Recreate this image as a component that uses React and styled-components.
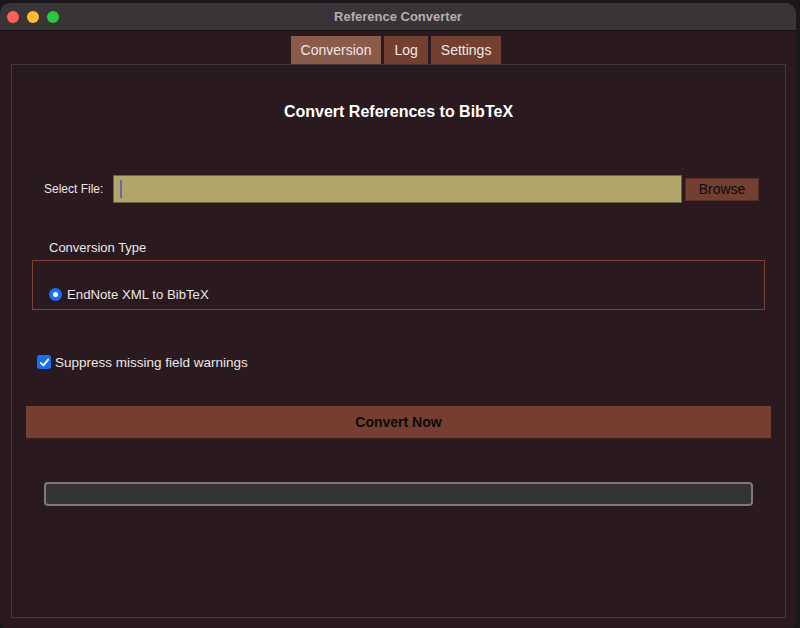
import React from 'react';
import styled, { createGlobalStyle } from 'styled-components';

const GlobalStyle = createGlobalStyle`
  html, body {
    margin: 0;
    padding: 0;
    background: #1b181d;
    font-family: "Liberation Sans", Arial, sans-serif;
  }
`;

const Desktop = styled.div`
  width: 800px;
  height: 628px;
  padding-top: 3px;
  box-sizing: border-box;
  overflow: hidden;
`;

const Window = styled.div`
  width: 796px;
  height: 627px;
  display: flex;
  flex-direction: column;
  border-radius: 10px;
  overflow: hidden;
  background: #2a1a1f;
`;

const TitleBar = styled.div`
  height: 27px;
  flex-shrink: 0;
  display: flex;
  align-items: center;
  position: relative;
  background: #393536;
  border-bottom: 1px solid #151113;
`;

const Lights = styled.div`
  display: flex;
  gap: 8px;
  padding-left: 7px;
`;

const Light = styled.span`
  width: 12px;
  height: 12px;
  border-radius: 50%;
  background: ${p => p.color};
`;

const WindowTitle = styled.div`
  position: absolute;
  left: 0;
  right: 0;
  text-align: center;
  font-size: 13px;
  font-weight: bold;
  color: #b3aeaf;
  pointer-events: none;
`;

const Body = styled.div`
  flex: 1;
  display: flex;
  flex-direction: column;
  padding: 5px 10px 12px 11px;
`;

const Tabs = styled.div`
  display: flex;
  justify-content: center;
  gap: 3px;
  padding-right: 5px;
`;

const Tab = styled.div`
  height: 28px;
  padding: 0 10px;
  display: flex;
  align-items: center;
  font-size: 14px;
  color: #efe7e5;
  background: ${p => (p.active ? '#8a5a4a' : '#723f30')};
`;

const Panel = styled.div`
  flex: 1;
  display: flex;
  flex-direction: column;
  border: 1px solid #403a3c;
  padding-top: 37px;
`;

const Heading = styled.h1`
  margin: 0;
  text-align: center;
  font-size: 16px;
  line-height: 20px;
  font-weight: bold;
  color: #ffffff;
`;

const FileRow = styled.div`
  display: flex;
  align-items: center;
  margin-top: 53px;
  padding: 0 26px 0 32px;
`;

const Label = styled.span`
  font-size: 12px;
  color: #ece6e6;
  margin-right: 10px;
`;

const FileInput = styled.div`
  flex: 1;
  height: 28px;
  box-sizing: border-box;
  display: flex;
  align-items: center;
  padding-left: 6px;
  background: #b1a569;
  border: 1px solid #6e6340;
`;

const Caret = styled.span`
  width: 2px;
  height: 18px;
  background: #5b6cbf;
`;

const BrowseButton = styled.button`
  margin-left: 3px;
  width: 74px;
  height: 23px;
  padding: 0;
  font-family: inherit;
  font-size: 14px;
  color: #0c0a0a;
  background: #733f30;
  border: 1px solid #5c2f23;
`;

const GroupTitle = styled.div`
  margin: 37px 0 0 37px;
  font-size: 13px;
  line-height: 16px;
  color: #ece6e6;
`;

const GroupBox = styled.div`
  margin: 4px 20px 0 20px;
  height: 50px;
  box-sizing: border-box;
  border: 1px solid #7a4232;
  padding: 25px 0 0 16px;
`;

const OptionRow = styled.label`
  display: flex;
  align-items: center;
  gap: 5px;
  height: 16px;
  font-size: 13.2px;
  color: #ece6e6;
`;

const Radio = styled.span`
  width: 13px;
  height: 13px;
  border-radius: 50%;
  background: #1a6ff0;
  display: flex;
  align-items: center;
  justify-content: center;
  &::after {
    content: '';
    width: 5px;
    height: 5px;
    border-radius: 50%;
    background: #ffffff;
  }
`;

const CheckRow = styled(OptionRow)`
  margin: 44px 0 0 25px;
  gap: 4px;
  font-size: 13.5px;
`;

const Checkbox = styled.span`
  width: 14px;
  height: 14px;
  border-radius: 3px;
  background: #1a6ff0;
  display: flex;
  align-items: center;
  justify-content: center;
`;

const ConvertButton = styled.button`
  margin: 36px 14px 0 14px;
  height: 33px;
  padding: 0;
  border: none;
  border-bottom: 1px solid #3a1f1a;
  background: #743f31;
  font-family: inherit;
  font-size: 14px;
  font-weight: bold;
  color: #0c0a0a;
`;

const Progress = styled.div`
  margin: 43px 32px 0 32px;
  height: 24px;
  box-sizing: border-box;
  border: 2px solid #7c7a7b;
  border-radius: 4px;
  background: #343434;
`;

const App = () => (
  <>
    <GlobalStyle />
    <Desktop>
      <Window>
        <TitleBar>
          <Lights>
            <Light color="#fe5f57" />
            <Light color="#febc2e" />
            <Light color="#28c840" />
          </Lights>
          <WindowTitle>Reference Converter</WindowTitle>
        </TitleBar>
        <Body>
          <Tabs>
            <Tab active>Conversion</Tab>
            <Tab>Log</Tab>
            <Tab>Settings</Tab>
          </Tabs>
          <Panel>
            <Heading>Convert References to BibTeX</Heading>
            <FileRow>
              <Label>Select File:</Label>
              <FileInput>
                <Caret />
              </FileInput>
              <BrowseButton>Browse</BrowseButton>
            </FileRow>
            <GroupTitle>Conversion Type</GroupTitle>
            <GroupBox>
              <OptionRow>
                <Radio />
                EndNote XML to BibTeX
              </OptionRow>
            </GroupBox>
            <CheckRow>
              <Checkbox>
                <svg width="11" height="11" viewBox="0 0 12 12">
                  <path d="M2 6.5 L4.8 9.2 L10 2.8" fill="none" stroke="#fff" strokeWidth="2" strokeLinecap="round" strokeLinejoin="round" />
                </svg>
              </Checkbox>
              Suppress missing field warnings
            </CheckRow>
            <ConvertButton>Convert Now</ConvertButton>
            <Progress />
          </Panel>
        </Body>
      </Window>
    </Desktop>
  </>
);

export default App;
